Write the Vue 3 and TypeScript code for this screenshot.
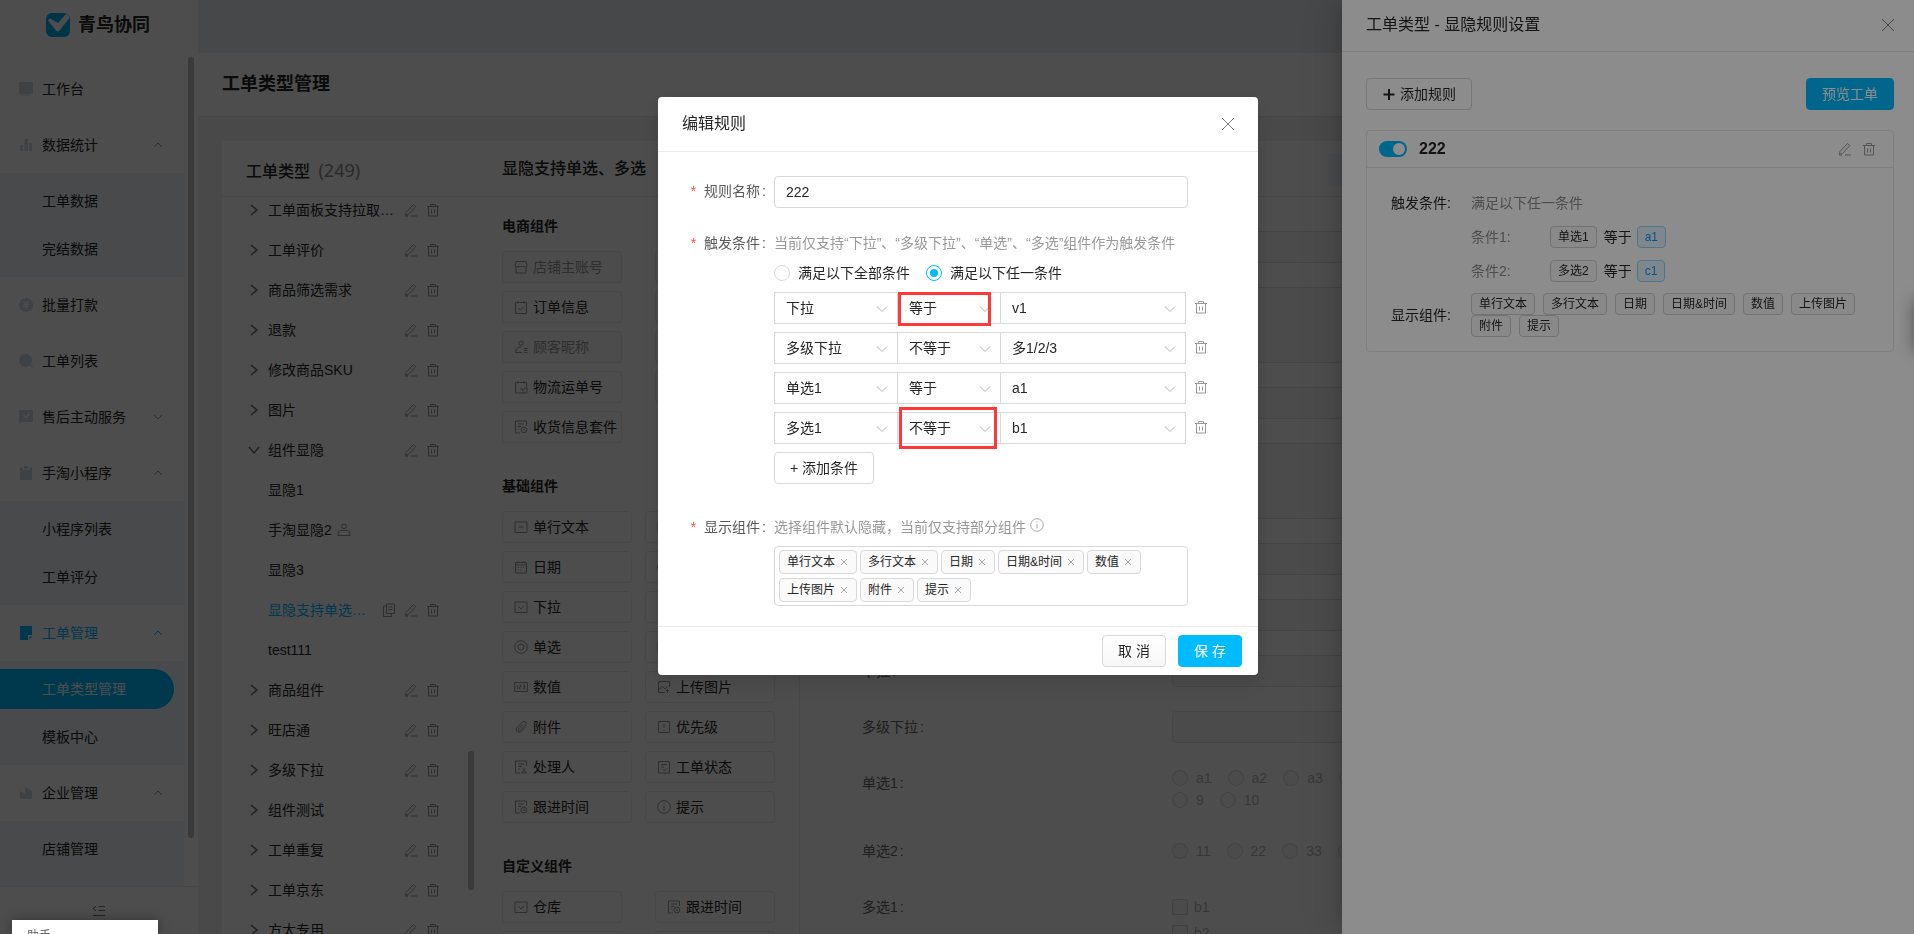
<script setup lang="ts">
import { ref } from 'vue'

interface MenuItem {
  label: string
  icon: string
  arrow?: 'up' | 'down'
  active?: boolean
  children?: { label: string; active?: boolean }[]
}

interface TreeRow {
  label: string
  kind: 'closed' | 'open' | 'leaf'
  tools?: boolean
  active?: boolean
  person?: boolean
}

interface Part {
  label: string
  icon: string
  disabled?: boolean
}

const menu: MenuItem[] = [
  { label: '工作台', icon: 'M0 0h14v12H0zM2 12.5h10v1H2z' },
  {
    label: '数据统计',
    icon: 'M1 7h3v6H1zM5.5 1h3.5v12H5.500zM10 5h3v8h-3z',
    arrow: 'up',
    children: [{ label: '工单数据' }, { label: '完结数据' }],
  },
  {
    label: '批量打款',
    icon: 'M7 0a7 7 0 1 0 0 14A7 7 0 0 0 7 0zM4 3h1.500L7 5.500 8.500 3H10L8.200 6H10v1H7.700v1H10v1H7.700v2H6.300V9H4V8h2.300V7H4V6h1.800z',
  },
  { label: '工单列表', icon: 'M6.500 0a6.500 6.500 0 1 0 4 11.600l2.500 2.200 1-1-2.300-2.300A6.500 6.500 0 0 0 6.500 0z' },
  { label: '售后主动服务', icon: 'M0 0h14v12H2.500L0 14zM4 5l3 3.800L11 4.200 10 3.300 7 6.800 5 4.200z', arrow: 'down' },
  {
    label: '手淘小程序',
    icon: 'M1 1.500h3V4h6V1.500h3V14H1zM5 0h4v3H5z',
    arrow: 'up',
    children: [{ label: '小程序列表' }, { label: '工单评分' }],
  },
  {
    label: '工单管理',
    icon: 'M1 0h12v9H9v5H1zM10.500 10.500H13L10.500 13z',
    arrow: 'up',
    active: true,
    children: [{ label: '工单类型管理', active: true }, { label: '模板中心' }],
  },
  {
    label: '企业管理',
    icon: 'M1 5l5 2.500V1l7 4v8H1z',
    arrow: 'up',
    children: [{ label: '店铺管理' }],
  },
]

const tree: TreeRow[] = [
  { label: '工单面板支持拉取…', kind: 'closed', tools: true },
  { label: '工单评价', kind: 'closed', tools: true },
  { label: '商品筛选需求', kind: 'closed', tools: true },
  { label: '退款', kind: 'closed', tools: true },
  { label: '修改商品SKU', kind: 'closed', tools: true },
  { label: '图片', kind: 'closed', tools: true },
  { label: '组件显隐', kind: 'open', tools: true },
  { label: '显隐1', kind: 'leaf' },
  { label: '手淘显隐2', kind: 'leaf', person: true },
  { label: '显隐3', kind: 'leaf' },
  { label: '显隐支持单选…', kind: 'leaf', tools: true, active: true },
  { label: 'test111', kind: 'leaf' },
  { label: '商品组件', kind: 'closed', tools: true },
  { label: '旺店通', kind: 'closed', tools: true },
  { label: '多级下拉', kind: 'closed', tools: true },
  { label: '组件测试', kind: 'closed', tools: true },
  { label: '工单重复', kind: 'closed', tools: true },
  { label: '工单京东', kind: 'closed', tools: true },
  { label: '方太专用', kind: 'closed', tools: true },
]

const glyph: Record<string, string> = {
  shop: 'M2 1.500h10l1 4.500c-1 1.500-2.500 1-3 0-.8 1.300-2.200 1.300-3 0-.8 1.300-2.200 1.300-3 0-.5 1-2 1.500-3 0zM2 7v6h10V7',
  order: 'M1.500 2.500h11v11h-11zM4 1v2.500M10 1v2.500M4.500 8l2 2 3.500-3.500',
  guest: 'M7 1a2.200 2.200 0 1 0 0 4.400A2.200 2.200 0 0 0 7 1zM8 12.500H1.500C1.500 8.500 4 7 7 7M10 8.500h3.500M10 10.500h3.500M10 12.500h3.500',
  truck: 'M7 13H1.500V2.500h11V7M4 1v2.500M10 1v2.500M6 9h3v4M9 10l2-2h2v5H7',
  address: 'M6 13H1.500V1h11v5M4 4h6M4 6.500h3M4 9h1M10 7a2.800 2.800 0 1 0 0 5.600A2.800 2.800 0 0 0 10 7zM10 9v1.500',
  line: 'M1 2h12v10.500H1zM4.500 7h5',
  date: 'M1.500 2.500h11v10.500h-11zM1.500 5h11M4 1v2.500M10 1v2.500M4 7.500h1M6.500 7.500h1M9 7.500h1M4 10h1M6.500 10h1',
  select: 'M1 2h12v10.500H1zM4 6l3 3 3-3',
  radio: 'M7 .7a6.300 6.300 0 1 0 0 12.600A6.300 6.300 0 0 0 7 .7zM7 4a3 3 0 1 0 0 6 3 3 0 0 0 0-6z',
  number: 'M.7 2.500h12.600v9H.7zM3.500 5v4M5.500 5h1.500v2H5.500v2H7M9 5h1.500v4H9M9 7h1.500',
  upload: 'M8 12.500H1.500v-11h11V7M2 10l3-4 3 3 2-2M10.500 13V9.500M9 11l1.500-1.500L12 11M4 4h.5',
  clip: 'M12 6.500l-5.500 5.500a3 3 0 0 1-4-4L8.500 2a2 2 0 0 1 3 3L6 10.500a1 1 0 0 1-1.500-1.500L9 4.500',
  level: 'M1.500 1.500h11v11h-11zM7 4v4M7 9.500v1',
  person: 'M6 13H1.500V1h11v5M4 4h6M4 6.500h4M4 9h2M10 7.500v2.500l-2.500 3h5L10 10',
  state: 'M1.500 1.500h11v11.500h-11zM4 4.500h6M4 7h3M6 9.500l1.500 1.500L10 8.500',
  clock: 'M6 13H1.500V1h11v5M4 4h6M4 6.500h3M4 9h1M9.800 7a3 3 0 1 0 0 6 3 3 0 0 0 0-6zM9.800 8.500v2H11',
  info: 'M7 .7a6.300 6.300 0 1 0 0 12.600A6.300 6.300 0 0 0 7 .7zM7 6v4.500M7 3.500v1',
}

const groups: { title: string; wide?: boolean; parts: Part[] }[] = [
  {
    title: '电商组件',
    parts: [
      { label: '店铺主账号', icon: 'shop', disabled: true },
      { label: '', icon: '' },
      { label: '订单信息', icon: 'order' },
      { label: '', icon: '' },
      { label: '顾客昵称', icon: 'guest', disabled: true },
      { label: '', icon: '' },
      { label: '物流运单号', icon: 'truck' },
      { label: '', icon: '' },
      { label: '收货信息套件', icon: 'address' },
    ],
  },
  {
    title: '基础组件',
    wide: true,
    parts: [
      { label: '单行文本', icon: 'line' },
      { label: '', icon: 'line' },
      { label: '日期', icon: 'date' },
      { label: '', icon: 'radio' },
      { label: '下拉', icon: 'select' },
      { label: '', icon: 'guest' },
      { label: '单选', icon: 'radio' },
      { label: '', icon: 'select' },
      { label: '数值', icon: 'number' },
      { label: '上传图片', icon: 'upload' },
      { label: '附件', icon: 'clip' },
      { label: '优先级', icon: 'level' },
      { label: '处理人', icon: 'person' },
      { label: '工单状态', icon: 'state' },
      { label: '跟进时间', icon: 'clock' },
      { label: '提示', icon: 'info' },
    ],
  },
  {
    title: '自定义组件',
    parts: [
      { label: '仓库', icon: 'select' },
      { label: '跟进时间', icon: 'clock' },
      { label: '', icon: '' },
      { label: '', icon: '' },
    ],
  },
]

const fields: { label: string; tall?: boolean }[] = [
  { label: '' },
  { label: '', tall: true },
  { label: '' },
  { label: '', tall: true },
  { label: '' },
  { label: '' },
  { label: '下拉' },
  { label: '多级下拉' },
]

const choices: { label: string; lines: string[][] }[] = [
  { label: '单选1', lines: [['a1', 'a2', 'a3', ''], ['9', '10']] },
  { label: '单选2', lines: [['11', '22', '33', '']] },
]

const shownTags = ['单行文本', '多行文本', '日期', '日期&时间', '数值', '上传图片', '附件', '提示']

const savedConditions = [
  { name: '条件1:', field: '单选1', value: 'a1' },
  { name: '条件2:', field: '多选2', value: 'c1' },
]

const ruleName = ref('222')
const matchMode = ref('any')
const ruleOn = ref(true)
const conditions = ref([
  { field: '下拉', op: '等于', value: 'v1', mark: 'mark-a' },
  { field: '多级下拉', op: '不等于', value: '多1/2/3', mark: '' },
  { field: '单选1', op: '等于', value: 'a1', mark: '' },
  { field: '多选1', op: '不等于', value: 'b1', mark: 'mark-b' },
])
</script>

<template>
  <div class="app">
    <nav class="side">
      <div class="brand">
        <svg width="24" height="24" viewBox="0 0 24 24">
          <rect width="24" height="24" rx="6" fill="#00aeef" />
          <path d="M20 1l-8 9-7-4c-2-1-3.500.5-2.500 2.300l7.500 9.200c1 1.300 2.500 1.300 3.500 0L23.500 5 22 1.500z" fill="#fff" />
        </svg>
        <span>青鸟协同</span>
      </div>
      <div class="menu">
        <template v-for="item in menu" :key="item.label">
          <a href="#" class="menu-top" :class="{ active: item.active }">
            <svg class="menu-icon" width="14" height="14" viewBox="0 0 14 14"><path fill-rule="evenodd" :d="item.icon" /></svg>
            <span>{{ item.label }}</span>
            <svg v-if="item.arrow" class="menu-arrow" width="10" height="10" viewBox="0 0 10 10">
              <path :d="item.arrow === 'up' ? 'M1 7l4-4 4 4' : 'M1 3l4 4 4-4'" />
            </svg>
          </a>
          <div v-if="item.children" class="submenu">
            <a v-for="c in item.children" :key="c.label" href="#" :class="{ current: c.active }">{{ c.label }}</a>
          </div>
        </template>
      </div>
      <i class="bar side-bar"></i>
      <div class="side-foot">
        <svg width="14" height="12" viewBox="0 0 14 12"><path d="M6.500 1.500H13M6.500 5.500H13M1 10.500h12M4 1L1 3.500 4 6" /></svg>
      </div>
    </nav>

    <main class="main">
      <header class="topbar"></header>
      <h1>工单类型管理</h1>
      <div class="content">
        <div class="card">
          <section class="tree">
            <h2>工单类型 <span>(249)</span></h2>
            <div class="tree-clip">
              <ul>
                <li v-for="row in tree" :key="row.label" :class="{ active: row.active }">
                  <svg class="twist" width="14" height="14" viewBox="0 0 14 14">
                    <path v-if="row.kind === 'closed'" d="M4 2l6 5-6 5" />
                    <path v-if="row.kind === 'open'" d="M2 4l5 6 5-6" />
                  </svg>
                  <span class="tree-label">{{ row.label }}</span>
                  <svg v-if="row.person" class="ico" width="14" height="14" viewBox="0 0 14 14">
                    <path d="M7 1a2.300 2.300 0 1 0 0 4.600A2.300 2.300 0 0 0 7 1zM3.500 7.500h7c1.500 0 2.500 2 2.500 5H1c0-3 1-5 2.500-5z" />
                  </svg>
                  <span v-if="row.tools" class="tools">
                    <button v-if="row.active" type="button" aria-label="复制">
                      <svg class="ico" width="14" height="14" viewBox="0 0 14 14"><path d="M4.500 1h8v9.500h-8zM4.500 3H1.500v10.500h8v-3M6.500 4h4M6.500 6.500h4" /></svg>
                    </button>
                    <button type="button" aria-label="编辑">
                      <svg class="ico" width="14" height="14" viewBox="0 0 14 14"><path d="M2 9.500L9.500 1.500l2.300 2L4.500 11.500l-3 .8zM1 13h3M7 13h6" /></svg>
                    </button>
                    <button type="button" aria-label="删除">
                      <svg class="ico" width="14" height="14" viewBox="0 0 14 14"><path d="M1 3.500h12M4.500 3.500v-2h5v2M2.500 3.500V13h9V3.500M5.500 6.500v4M8.500 6.500v4" /></svg>
                    </button>
                  </span>
                </li>
              </ul>
              <i class="bar tree-bar"></i>
            </div>
          </section>

          <section class="editor">
            <header class="editor-head">
              <h2>显隐支持单选、多选</h2>
              <span class="head-chip"></span>
            </header>
            <div class="editor-body">
              <div class="palette">
                <section v-for="g in groups" :key="g.title">
                  <h3>{{ g.title }}</h3>
                  <div class="parts" :class="{ wide: g.wide }">
                    <div v-for="(p, i) in g.parts" :key="i" class="part" :class="{ off: p.disabled }">
                      <svg v-if="p.icon" class="ico" width="14" height="14" viewBox="0 0 14 14"><path :d="glyph[p.icon]" /></svg>
                      <span>{{ p.label }}</span>
                    </div>
                  </div>
                </section>
              </div>
              <div class="preview">
                <div v-for="(f, i) in fields" :key="i" class="prow">
                  <span v-if="f.label" class="plabel">{{ f.label }}<b>:</b></span>
                  <span v-else></span>
                  <div class="pbox" :class="{ tall: f.tall }"></div>
                </div>
                <div v-for="c in choices" :key="c.label" class="prow">
                  <span class="plabel">{{ c.label }}<b>:</b></span>
                  <div class="plines">
                    <div v-for="(line, i) in c.lines" :key="i" class="pline">
                      <label v-for="o in line" :key="o"><input type="radio" disabled />{{ o }}</label>
                    </div>
                  </div>
                </div>
                <div class="prow">
                  <span class="plabel">多选1<b>:</b></span>
                  <div class="pchecks">
                    <label><input type="checkbox" disabled />b1</label>
                    <label><input type="checkbox" disabled />b2</label>
                  </div>
                </div>
              </div>
            </div>
          </section>
        </div>
      </div>
    </main>

    <div class="mask"></div>

    <aside class="drawer">
      <header>
        <span>工单类型 - 显隐规则设置</span>
        <button type="button" class="plain" aria-label="关闭">
          <svg class="cross" width="14" height="14" viewBox="0 0 14 14"><path d="M1 1l12 12M13 1L1 13" /></svg>
        </button>
      </header>
      <div class="drawer-body">
        <div class="drawer-actions">
          <button type="button" class="btn add-rule">
            <svg width="14" height="14" viewBox="0 0 14 14"><path d="M7 2v11M1.500 7.500h11" /></svg>添加规则
          </button>
          <button type="button" class="btn primary">预览工单</button>
        </div>
        <article class="rule">
          <header>
            <input v-model="ruleOn" type="checkbox" role="switch" class="switch" aria-label="启用规则" />
            <strong>222</strong>
            <button type="button" class="plain" aria-label="编辑">
              <svg class="ico" width="14" height="14" viewBox="0 0 14 14"><path d="M2 9.500L9.500 1.500l2.300 2L4.500 11.500l-3 .8zM1 13h3M7 13h6" /></svg>
            </button>
            <button type="button" class="plain" aria-label="删除">
              <svg class="ico" width="14" height="14" viewBox="0 0 14 14"><path d="M1 3.500h12M4.500 3.500v-2h5v2M2.500 3.500V13h9V3.500M5.500 6.500v4M8.500 6.500v4" /></svg>
            </button>
          </header>
          <div class="rule-body">
            <div class="rule-row">
              <span>触发条件:</span>
              <span class="muted">满足以下任一条件</span>
            </div>
            <div v-for="c in savedConditions" :key="c.name" class="rule-row cond">
              <span></span>
              <span class="muted">{{ c.name }}</span>
              <div class="cond-expr">
                <span class="tag">{{ c.field }}</span>
                <span>等于</span>
                <span class="tag blue">{{ c.value }}</span>
              </div>
            </div>
            <div class="rule-row shown">
              <span>显示组件:</span>
              <div class="tags">
                <span v-for="t in shownTags" :key="t" class="tag">{{ t }}</span>
              </div>
            </div>
          </div>
        </article>
      </div>
    </aside>

    <div class="mask modal-layer">
      <form class="modal" @submit.prevent>
        <header>
          <span>编辑规则</span>
          <button type="button" class="plain" aria-label="关闭">
            <svg class="cross" width="14" height="14" viewBox="0 0 14 14"><path d="M1 1l12 12M13 1L1 13" /></svg>
          </button>
        </header>
        <div class="modal-body">
          <div class="frow">
            <label class="flabel big" for="rule-name"><i>*</i>规则名称<b>:</b></label>
            <input id="rule-name" v-model="ruleName" class="text" type="text" />
          </div>
          <div class="frow">
            <span class="flabel"><i>*</i>触发条件<b>:</b></span>
            <div class="fcol">
              <p class="hint">当前仅支持“下拉”、“多级下拉”、“单选”、“多选”组件作为触发条件</p>
              <div class="modes">
                <label><input v-model="matchMode" type="radio" name="mode" value="all" />满足以下全部条件</label>
                <label><input v-model="matchMode" type="radio" name="mode" value="any" />满足以下任一条件</label>
              </div>
              <div v-for="(c, i) in conditions" :key="i" class="condition">
                <div class="pick w-field">
                  <select v-model="c.field" aria-label="组件"><option>{{ c.field }}</option></select>
                  <svg width="12" height="12" viewBox="0 0 12 12"><path d="M1 3.500l5 5 5-5" /></svg>
                </div>
                <div class="pick w-op">
                  <select v-model="c.op" aria-label="关系"><option>{{ c.op }}</option></select>
                  <svg width="12" height="12" viewBox="0 0 12 12"><path d="M1 3.500l5 5 5-5" /></svg>
                  <i v-if="c.mark" class="mark" :class="c.mark"></i>
                </div>
                <div class="pick w-value">
                  <select v-model="c.value" aria-label="选项"><option>{{ c.value }}</option></select>
                  <svg width="12" height="12" viewBox="0 0 12 12"><path d="M1 3.500l5 5 5-5" /></svg>
                </div>
                <button type="button" class="plain remove" aria-label="删除条件">
                  <svg class="ico" width="14" height="14" viewBox="0 0 14 14"><path d="M1 3.500h12M4.500 3.500v-2h5v2M2.500 3.500V13h9V3.500M5.500 6.500v4M8.500 6.500v4" /></svg>
                </button>
              </div>
              <button type="button" class="btn add-cond">+ 添加条件</button>
            </div>
          </div>
          <div class="frow last">
            <span class="flabel"><i>*</i>显示组件<b>:</b></span>
            <div class="fcol">
              <p class="hint">
                选择组件默认隐藏，当前仅支持部分组件
                <svg class="ico" width="14" height="14" viewBox="0 0 14 14"><path :d="glyph.info" /></svg>
              </p>
              <div class="tagbox">
                <span v-for="t in shownTags" :key="t" class="pill">
                  {{ t }}
                  <button type="button" class="plain" :aria-label="'移除' + t">
                    <svg width="8" height="8" viewBox="0 0 8 8"><path d="M1 1l6 6M7 1L1 7" /></svg>
                  </button>
                </span>
              </div>
            </div>
          </div>
        </div>
        <footer>
          <button type="button" class="btn cancel">取 消</button>
          <button type="submit" class="btn primary">保 存</button>
        </footer>
      </form>
    </div>

    <div class="helper">助手</div>
    <div class="edge-tab"></div>
  </div>
</template>

<style>
html,
body {
  margin: 0;
  height: 100%;
  overflow: hidden;
}
</style>

<style scoped>
* {
  box-sizing: border-box;
}
.app {
  display: flex;
  height: 100vh;
  overflow: hidden;
  background: #f0f0f0;
  color: #262626;
  font: 14px/22px "Liberation Sans", "Noto Sans CJK SC", sans-serif;
}
h1,
h2,
h3,
p,
ul {
  margin: 0;
  padding: 0;
  list-style: none;
}
a {
  color: inherit;
  text-decoration: none;
}
i,
b {
  font-style: normal;
  font-weight: 400;
}
button,
input,
select {
  font: inherit;
  color: inherit;
}
svg {
  flex: none;
  fill: none;
}
.ico {
  stroke: #999;
}
.plain,
.tools button {
  display: flex;
  padding: 0;
  border: 0;
  background: none;
}
.bar {
  position: absolute;
  width: 6px;
  border-radius: 3px;
  background: #bfbfbf;
}

/* sidebar */
.side {
  position: relative;
  display: flex;
  flex: none;
  flex-direction: column;
  width: 198px;
  background: #fff;
}
.brand {
  display: flex;
  flex: none;
  align-items: center;
  gap: 8px;
  height: 50px;
  padding-left: 46px;
  font-size: 18px;
  font-weight: 700;
}
.menu {
  flex: 1;
  min-height: 0;
  margin-top: 11px;
  overflow: hidden;
}
.menu-top {
  display: flex;
  align-items: center;
  height: 56px;
  padding: 0 35px 0 19px;
}
.menu-top span {
  margin-left: 9px;
}
.menu-icon {
  fill: #d0d9e2;
}
.menu-arrow {
  margin-left: auto;
  stroke: #999;
}
.menu-top.active {
  color: #00bbff;
}
.active .menu-icon {
  fill: #00bbff;
}
.active .menu-arrow {
  stroke: #00bbff;
}
.submenu {
  display: grid;
  gap: 8px;
  width: 184px;
  padding: 8px 0;
  background: #f1f4f8;
}
.submenu:last-child {
  padding-bottom: 32px;
}
.submenu a {
  width: 174px;
  padding-left: 42px;
  border-radius: 0 20px 20px 0;
  line-height: 40px;
}
.submenu .current {
  background: #00bbff;
  color: #fff;
}
.side-bar {
  top: 57px;
  bottom: 96px;
  left: 188px;
}
.side-foot {
  display: flex;
  flex: none;
  align-items: center;
  justify-content: center;
  height: 48px;
  border-top: 1px solid #e3e6ea;
}
.side-foot svg {
  stroke: #737373;
}

/* main area */
.main {
  display: flex;
  flex: 1;
  flex-direction: column;
  min-width: 0;
}
.topbar {
  flex: none;
  height: 53px;
  background: #e8edf4;
}
h1 {
  flex: none;
  height: 64px;
  padding-left: 24px;
  border-bottom: 1px solid #e8e8e8;
  background: #fff;
  font-size: 18px;
  line-height: 62px;
}
.content {
  flex: 1;
  min-height: 0;
  padding: 24px 24px 0;
}
.card {
  display: flex;
  height: 100%;
  background: #fff;
}
.tree {
  display: flex;
  flex: none;
  flex-direction: column;
  width: 256px;
}
.tree h2 {
  flex: none;
  height: 56px;
  padding-left: 24px;
  border-bottom: 1px solid #e8e8e8;
  font-size: 16px;
  font-weight: 500;
  line-height: 58px;
}
.tree h2 span {
  margin-left: 4px;
  color: #8c8c8c;
  font-family: "Noto Sans", sans-serif;
  font-size: 18px;
  font-weight: 400;
}
.tree-clip {
  position: relative;
  flex: 1;
  min-height: 0;
  overflow: hidden;
}
.tree ul {
  margin-top: -7px;
}
.tree li {
  display: flex;
  align-items: center;
  height: 40px;
  padding: 0 38px 0 25px;
}
.tree li.active {
  color: #00bbff;
}
.twist {
  stroke: #737373;
  stroke-width: 1.5;
}
.tree-label {
  margin: 0 5px 0 7px;
  white-space: nowrap;
}
.tools {
  display: flex;
  gap: 8px;
  margin-left: auto;
}
.tree-bar {
  right: 4px;
  bottom: 44px;
  height: 139px;
}
.editor {
  display: flex;
  flex: 1;
  flex-direction: column;
  min-width: 0;
}
.editor-head {
  display: flex;
  flex: none;
  align-items: center;
  justify-content: space-between;
  height: 56px;
  padding: 0 24px;
  border-bottom: 1px solid #e8e8e8;
}
.editor-head h2 {
  font-size: 16px;
  font-weight: 500;
}
.head-chip {
  width: 538px;
  height: 32px;
  border-radius: 4px;
  background: #f2f6fb;
}
.editor-body {
  display: flex;
  flex: 1;
  min-height: 0;
  overflow: hidden;
}
.palette {
  display: flex;
  flex: none;
  flex-direction: column;
  gap: 32px;
  width: 321px;
  padding: 18px 24px;
}
h3 {
  margin-bottom: 14px;
  font-size: 14px;
}
.parts {
  display: grid;
  grid-template-columns: 120px 120px;
  justify-content: space-between;
  gap: 8px;
}
.parts.wide {
  grid-template-columns: 130px 130px;
}
.part {
  display: flex;
  align-items: center;
  gap: 5px;
  height: 32px;
  padding-left: 11px;
  border: 1px solid #ebebeb;
  border-radius: 4px;
  white-space: nowrap;
}
.part.off {
  background: #fafafa;
  color: #999;
}
.preview {
  display: flex;
  flex: 1;
  flex-direction: column;
  gap: 24px;
  padding: 34px 62px 0;
  border-left: 1px solid #ebebeb;
}
.prow {
  display: grid;
  flex: none;
  grid-template-columns: 310px 1fr;
  min-height: 32px;
}
.plabel {
  color: #666;
  line-height: 32px;
}
.plabel b {
  margin-left: 2px;
}
.pbox {
  height: 32px;
  border: 1px solid #e3e3e3;
  border-radius: 4px;
  background: #f9f9f9;
}
.pbox.tall {
  height: 76px;
}
.plines {
  align-self: center;
}
.pline {
  display: flex;
  gap: 16px;
}
.pline label,
.pchecks label {
  display: flex;
  align-items: center;
  color: #b8b8b8;
}
.pline input,
.pchecks input,
.modes input {
  appearance: none;
  width: 16px;
  height: 16px;
  margin: 0 8px 0 0;
  border: 1px solid #d9d9d9;
  border-radius: 50%;
  background: #f9f9f9;
}
.pchecks {
  padding-top: 3px;
}
.pchecks label {
  height: 26px;
}
.pchecks input {
  margin-right: 6px;
  border-radius: 2px;
}

/* overlays */
.mask {
  position: fixed;
  inset: 0;
  background: rgba(0, 0, 0, 0.45);
}
.drawer {
  position: fixed;
  inset: 0 0 0 auto;
  width: 572px;
  background: #fff;
  box-shadow: -6px 0 16px -8px rgba(0, 0, 0, 0.2), -9px 0 28px rgba(0, 0, 0, 0.08), -12px 0 48px 16px rgba(0, 0, 0, 0.05);
}
.drawer > header {
  display: flex;
  align-items: center;
  justify-content: space-between;
  height: 52px;
  padding: 0 19px 2px 24px;
  border-bottom: 1px solid #e8e8e8;
  font-size: 16px;
}
.cross {
  stroke: #808080;
}
.drawer-body {
  padding: 26px 20px 0 24px;
}
.drawer-actions {
  display: flex;
  justify-content: space-between;
  margin-bottom: 20px;
}
.btn {
  display: flex;
  align-items: center;
  justify-content: center;
  height: 32px;
  padding: 0 15px;
  border: 1px solid #d9d9d9;
  border-radius: 4px;
  background: #fff;
  white-space: nowrap;
}
.btn.primary {
  border-color: #00bbff;
  background: #00bbff;
  color: #fff;
}
.add-rule {
  gap: 4px;
}
.add-rule svg {
  stroke: #262626;
  stroke-width: 2;
}
.rule {
  border: 1px solid #e8e8e8;
  border-radius: 4px;
}
.rule header {
  display: flex;
  align-items: center;
  gap: 10px;
  height: 37px;
  padding: 0 17px 0 12px;
  border-bottom: 1px solid #e8e8e8;
}
.rule strong {
  flex: 1;
  margin-left: 2px;
  font-size: 16px;
}
.switch {
  appearance: none;
  display: flex;
  width: 28px;
  height: 16px;
  margin: 0;
  padding: 2px;
  border-radius: 8px;
  background: #bfbfbf;
}
.switch::before {
  content: "";
  width: 12px;
  height: 12px;
  border-radius: 50%;
  background: #fff;
}
.switch:checked {
  justify-content: flex-end;
  background: #00bbff;
}
.rule-body {
  padding: 24px 24px 14px;
}
.rule-row {
  display: grid;
  grid-template-columns: 80px 1fr;
  align-items: center;
}
.rule-row.cond {
  grid-template-columns: 80px 79px 1fr;
  margin-top: 12px;
}
.rule-row.shown {
  margin-top: 11px;
}
.muted {
  color: #8c8c8c;
}
.cond-expr {
  display: flex;
  align-items: center;
}
.cond-expr > :nth-child(2) {
  margin: 0 5px 0 7px;
}
.tags {
  display: flex;
  flex-wrap: wrap;
  column-gap: 8px;
}
.tag {
  height: 22px;
  padding: 0 7px;
  border: 1px solid #d0d0d0;
  border-radius: 4px;
  background: #fafafa;
  font-size: 12px;
  line-height: 20px;
}
.tag.blue {
  border-color: #91d5ff;
  background: #e6f7ff;
  color: #1890ff;
}

/* modal */
.modal-layer {
  display: flex;
  align-items: flex-start;
  justify-content: center;
  padding: 97px 0 0 2px;
}
.modal {
  width: 600px;
  border-radius: 4px;
  background: #fff;
  box-shadow: 0 3px 6px -4px rgba(0, 0, 0, 0.12), 0 6px 16px rgba(0, 0, 0, 0.08), 0 9px 28px 8px rgba(0, 0, 0, 0.05);
}
.modal > header {
  display: flex;
  align-items: center;
  justify-content: space-between;
  height: 55px;
  padding: 0 23px 0 24px;
  border-bottom: 1px solid #ebebeb;
  font-size: 16px;
}
.modal-body {
  display: flex;
  flex-direction: column;
  gap: 24px;
  padding: 24px 70px 20px 0;
}
.frow {
  display: grid;
  grid-template-columns: 116px 1fr;
}
.frow.last {
  margin-top: 8px;
}
.flabel {
  color: #595959;
  text-align: right;
}
.flabel.big {
  line-height: 30px;
}
.flabel i {
  margin-right: 8px;
  color: #ff4d4f;
}
.flabel b {
  margin: 0 8px 0 2px;
}
.text {
  width: 100%;
  height: 32px;
  padding: 0 11px;
  border: 1px solid #d9d9d9;
  border-radius: 4px;
}
.fcol {
  display: flex;
  flex-direction: column;
  gap: 8px;
  min-width: 0;
}
.hint {
  display: flex;
  gap: 4px;
  color: #999;
  white-space: nowrap;
}
.hint .ico {
  margin-top: 2px;
  stroke: #a6a6a6;
}
.modes {
  display: flex;
  gap: 16px;
}
.modes label {
  display: flex;
  align-items: center;
}
.modes input {
  display: grid;
  place-items: center;
  background: #fff;
}
.modes input:checked {
  border-color: #00bbff;
}
.modes input:checked::before {
  content: "";
  width: 8px;
  height: 8px;
  border-radius: 50%;
  background: #00bbff;
}
.condition {
  display: flex;
  align-items: center;
  margin-right: -8px;
}
.pick {
  position: relative;
  flex: none;
  height: 32px;
}
.pick + .pick {
  margin-left: -1px;
}
.w-field {
  width: 124px;
}
.w-op {
  width: 104px;
}
.w-value {
  width: 186px;
}
.pick select {
  appearance: none;
  width: 100%;
  height: 100%;
  padding: 0 11px;
  border: 1px solid #d9d9d9;
  border-radius: 0;
  background: #fff;
}
.pick svg {
  position: absolute;
  top: 11px;
  right: 10px;
  stroke: #b3b3b3;
  pointer-events: none;
}
.mark {
  position: absolute;
  z-index: 1;
  border: 3px solid #ff3838;
  pointer-events: none;
}
.mark-a {
  inset: 0 10px -2px 1px;
}
.mark-b {
  inset: -5px 4px -5px 2px;
}
.remove {
  margin-left: 8px;
}
.condition .remove {
  padding-bottom: 2px;
}
.add-cond {
  align-self: flex-start;
}
.tagbox {
  display: flex;
  flex-wrap: wrap;
  gap: 4px 3px;
  padding: 3px 4px;
  border: 1px solid #d9d9d9;
  border-radius: 4px;
}
.pill {
  display: flex;
  align-items: center;
  gap: 5px;
  height: 24px;
  padding: 0 8px 0 7px;
  border: 1px solid #d9d9d9;
  border-radius: 4px;
  background: #fafafa;
  font-size: 12px;
}
.pill svg {
  stroke: #a6a6a6;
}
.modal footer {
  display: flex;
  justify-content: flex-end;
  gap: 12px;
  padding: 8px 16px;
  border-top: 1px solid #ebebeb;
}
.modal footer .btn {
  width: 64px;
}
.cancel {
  background: linear-gradient(#fff, #f7f7f7);
}

/* floating widgets */
.helper {
  position: fixed;
  bottom: 0;
  left: 12px;
  width: 146px;
  height: 14px;
  padding-left: 15px;
  overflow: hidden;
  background: #fff;
  box-shadow: 0 0 12px rgba(0, 0, 0, 0.35);
  color: #666;
  font-size: 12px;
  line-height: 32px;
}
.edge-tab {
  position: fixed;
  top: 300px;
  right: -20px;
  width: 20px;
  height: 52px;
  box-shadow: 0 0 16px rgba(0, 0, 0, 0.4);
}
</style>
